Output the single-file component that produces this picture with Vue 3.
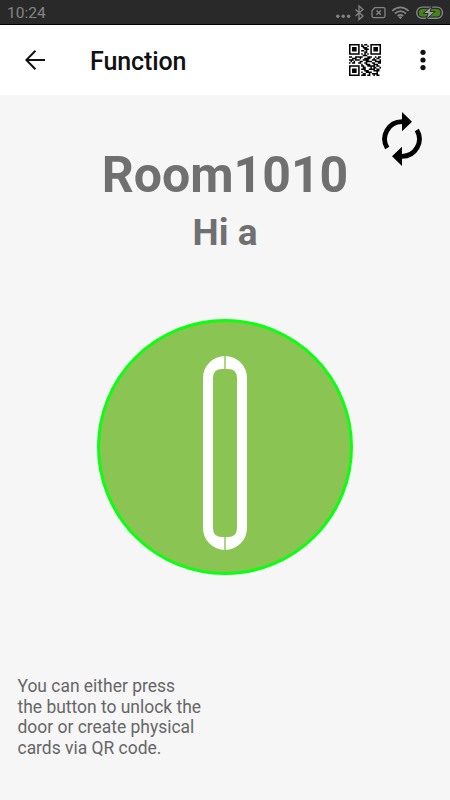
<script setup>
import { ref } from 'vue'

const room = ref('Room1010')
const user = ref('a')

const qrRows = [
  '111111101011001111111',
  '100000101100101000001',
  '101110100111001011101',
  '101110100011101011101',
  '101110101101001011101',
  '100000100011001000001',
  '111111101010101111111',
  '000000000111000000000',
  '110011111000111001011',
  '001110010011110010110',
  '111011100111100111001',
  '010100011001111001111',
  '101100110011000110011',
  '000000001001110011100',
  '111111101100111110110',
  '100000100110001011001',
  '101110101110011110110',
  '101110100011100011110',
  '101110101001111000100',
  '100000100110010111100',
  '111111101110110010110',
]

const qrPath = qrRows
  .map((row, y) => [...row].map((c, x) => (c === '1' ? `M${x} ${y}h1v1h-1z` : '')).join(''))
  .join('')
</script>

<template>
  <div class="screen">
    <!-- Status bar -->
    <div class="status-bar">
      <span class="time">10:24</span>
      <svg class="status-icons" width="112" height="24" viewBox="0 0 112 24" fill="none" stroke="#858585">
        <g fill="#858585" stroke="none">
          <circle cx="1.8" cy="16.2" r="1.7" />
          <circle cx="7.2" cy="16.2" r="1.7" />
          <circle cx="12.6" cy="16.2" r="1.7" />
        </g>
        <path d="M19.5 9.5l7.5 6.5-4 3.5V6l4 3.5-7.5 6.5" stroke-width="1.3" />
        <path d="M38.8 7.6h8.7q1.5 0 1.5 1.3v7.2q0 1.5-1.5 1.5h-10q-1.5 0-1.5-1.5v-5.4z" stroke-width="1.3" />
        <path d="M40.5 10.4l4.3 4.3M44.8 10.4l-4.3 4.3" stroke-width="1.4" />
        <path d="M56.2 10.8q8.2-7 16.4 0M58.9 13.5q5.5-4.6 11 0M61.6 16q2.8-2.2 5.6 0" stroke-width="1.7" />
        <path d="M62.4 17q2-1.5 4 0l-2 2.2z" fill="#858585" stroke="none" />
        <rect x="80.8" y="7.1" width="25.6" height="11.2" rx="5.2" stroke-width="1.4" />
        <rect x="82.9" y="9" width="21.4" height="7.4" rx="3.5" fill="#43851b" stroke="none" />
        <path d="M96.1 5.8l-9 7.7h5l-2 6 9-8h-5z" fill="#a0a0a0" stroke="#292929" stroke-width="1" />
      </svg>
    </div>

    <!-- App bar -->
    <header class="app-bar">
      <button class="icon-btn back" aria-label="Back">
        <svg width="20" height="20" viewBox="0 0 20 20" fill="none" stroke="#111" stroke-width="2">
          <path d="M20 10H1.5M10.4 .8L1.3 10l9.1 9.2" />
        </svg>
      </button>
      <h1 class="title">Function</h1>
      <button class="icon-btn qr" aria-label="QR code">
        <svg width="32" height="32" viewBox="0 0 21 21">
          <path :d="qrPath" fill="#000" />
        </svg>
      </button>
      <button class="icon-btn more" aria-label="More">
        <svg width="6" height="22" viewBox="0 0 6 22" fill="#111">
          <circle cx="3" cy="3.3" r="2.6" />
          <circle cx="3" cy="11" r="2.6" />
          <circle cx="3" cy="18.6" r="2.6" />
        </svg>
      </button>
    </header>

    <!-- Content -->
    <main class="content">
      <button class="icon-btn refresh" aria-label="Refresh">
        <svg width="40" height="54" viewBox="0 0 40 54">
          <path d="M5.2 36A17.3 17.3 0 0 1 20 9.7M34.8 18A17.3 17.3 0 0 1 20 44.3" fill="none" stroke="#000" stroke-width="4.8" />
          <path d="M20 0l10 9.7-10 9.6zM20 34.7v19.3l-10-9.7z" />
        </svg>
      </button>
      <h2 class="room">{{ room }}</h2>
      <p class="greeting">Hi {{ user }}</p>

      <button class="unlock" aria-label="Unlock">
        <svg width="44" height="194" viewBox="0 0 44 194">
          <path
            d="M22 0A22 22 0 0 1 44 22V172A22 22 0 0 1 0 172V22A22 22 0 0 1 22 0zM19 13Q10 13 10 22V172Q10 181 19 181H25Q34 181 34 172V22Q34 13 25 13z"
            fill="#fff" fill-rule="evenodd"
          />
          <path d="M22 0v14M22 180v14" stroke="#8ac452" stroke-width="1.4" />
        </svg>
      </button>

      <p class="hint">
        You can either press<br />
        the button to unlock the<br />
        door or create physical<br />
        cards via QR code.
      </p>
    </main>
  </div>
</template>

<style>
body {
  margin: 0;
}
</style>

<style scoped>
.screen {
  width: 100%;
  height: 100vh;
  display: flex;
  flex-direction: column;
  overflow: hidden;
  background: #f6f6f6;
  font-family: Roboto, sans-serif;
}

/* ── Status bar ── */
.status-bar {
  height: 25px;
  box-sizing: border-box;
  border-bottom: 1px solid #000;
  background: #292929;
  color: #858585;
  display: flex;
  align-items: center;
  justify-content: space-between;
  padding: 0 2px 0 7px;
  flex-shrink: 0;
}

.time {
  font-size: 15.5px;
  line-height: 24px;
  padding-top: 2px;
}

/* ── App bar ── */
.app-bar {
  height: 70px;
  flex-shrink: 0;
  display: flex;
  align-items: center;
  padding: 0 24.5px 0 25px;
  background: #fff;
}

.icon-btn {
  padding: 0;
  border: 0;
  background: none;
  display: flex;
}

.title {
  margin: 2px auto 0 45px;
  font-size: 25px;
  letter-spacing: -0.1px;
  font-weight: 500;
  color: #111;
}

.more {
  margin-left: 38.5px;
}

/* ── Content ── */
.content {
  flex: 1;
  display: flex;
  flex-direction: column;
  align-items: center;
  position: relative;
}

.refresh {
  position: absolute;
  top: 17px;
  right: 28px;
}

.room {
  margin: 50px 0 0;
  font-size: 50px;
  line-height: 60px;
  font-weight: 700;
  color: #707070;
}

.greeting {
  margin: 6px 0 0;
  font-size: 37px;
  line-height: 44px;
  font-weight: 700;
  color: #707070;
}

.unlock {
  width: 256px;
  height: 256px;
  box-sizing: border-box;
  margin-top: 64px;
  padding: 11px 0 0;
  border: 3px solid #0bff12;
  border-radius: 50%;
  background: #8ac452;
  display: flex;
  align-items: center;
  justify-content: center;
}

.hint {
  align-self: flex-start;
  margin: auto 0 42px 17.5px;
  font-size: 17.45px;
  line-height: 20.5px;
  color: #666;
}
</style>
